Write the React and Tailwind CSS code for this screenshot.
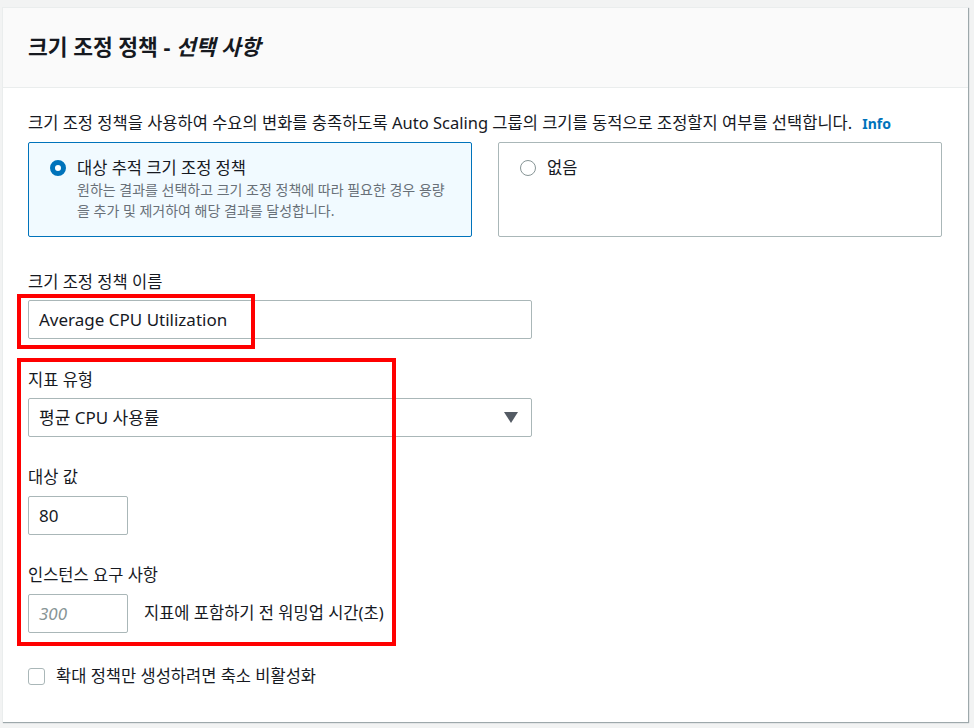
import React from "react";

const font = { fontFamily: '"Noto Sans", "Noto Sans CJK KR", sans-serif' };

function Label({ children }) {
  return <div className="text-[16.5px] leading-5 text-[#16191f]">{children}</div>;
}

function TextInput({ value, placeholder, className = "" }) {
  return (
    <div
      className={`h-[39px] flex items-center px-[10px] border border-[#aab7b8] rounded-[2px] bg-white text-[17px] ${className}`}
    >
      {value ? (
        <span className="text-[#16191f]">{value}</span>
      ) : (
        <span className="text-[#879596] italic">{placeholder}</span>
      )}
    </div>
  );
}

function RadioCard({ selected, title, desc }) {
  return (
    <div
      className={`flex-1 h-[95px] rounded-[2px] border px-[21px] pt-[15px] ${
        selected ? "border-[#0073bb] bg-[#f1faff]" : "border-[#aab7b8] bg-white"
      }`}
    >
      <div className="flex items-start gap-[11px]">
        {selected ? (
          <span className="mt-[2px] w-4 h-4 rounded-full border-[5px] border-[#0073bb] bg-white shrink-0" />
        ) : (
          <span className="mt-[2px] w-4 h-4 rounded-full border-[1.5px] border-[#879596] bg-white shrink-0" />
        )}
        <div>
          <div className="text-[16.5px] leading-5 text-[#16191f]">{title}</div>
          {desc && (
            <div className="mt-[1px] text-[14px] leading-[21px] text-[#687078]">{desc}</div>
          )}
        </div>
      </div>
    </div>
  );
}

export default function App() {
  return (
    <div className="w-[974px] h-[728px] bg-[#f2f3f3] pt-[7px] pl-[2px] pr-[6px] overflow-hidden" style={font}>
      <div className="h-[715px] bg-white border-t border-l border-[#eaeded] shadow-[1px_1px_1px_0_rgba(0,28,36,0.35)]">
        <div className="h-[80px] bg-[#fafafa] border-b border-[#eaeded] flex items-center pl-[25px]">
          <h2 className="text-[21.5px] font-bold text-[#16191f]">
            크기 조정 정책 - <span className="italic">선택 사항</span>
          </h2>
        </div>

        <div className="relative pl-[25px] pr-[26px] pt-[25px]">
          <div className="flex items-baseline text-[16.5px] leading-5 text-[#16191f]">
            <span>
              크기 조정 정책을 사용하여 수요의 변화를 충족하도록 Auto Scaling 그룹의 크기를 동적으로 조정할지 여부를 선택합니다.
            </span>
            <span className="ml-[10px] text-[14px] font-bold text-[#0073bb]">Info</span>
          </div>

          <div className="mt-[8px] flex gap-[26px]">
            <RadioCard
              selected
              title="대상 추적 크기 조정 정책"
              desc={
                <>
                  원하는 결과를 선택하고 크기 조정 정책에 따라 필요한 경우 용량
                  <br />을 추가 및 제거하여 해당 결과를 달성합니다.
                </>
              }
            />
            <RadioCard title="없음" />
          </div>

          <div className="mt-[35px]">
            <Label>크기 조정 정책 이름</Label>
            <TextInput className="mt-[8px] w-[504px]" value="Average CPU Utilization" />
          </div>

          <div className="mt-[31px]">
            <Label>지표 유형</Label>
            <div className="mt-[8px] w-[504px] h-[39px] flex items-center justify-between pl-[10px] pr-[13px] border border-[#aab7b8] rounded-[2px] text-[17px] text-[#16191f]">
              <span>평균 CPU 사용률</span>
              <svg width="14" height="11" viewBox="0 0 14 11">
                <path d="M0 0 H14 L7 11 Z" fill="#545b64" />
              </svg>
            </div>
          </div>

          <div className="mt-[30px]">
            <Label>대상 값</Label>
            <TextInput className="mt-[9px] w-[100px]" value="80" />
          </div>

          <div className="mt-[30px]">
            <Label>인스턴스 요구 사항</Label>
            <div className="mt-[9px] flex items-center gap-[16px]">
              <TextInput className="w-[100px]" placeholder="300" />
              <span className="text-[16.5px] text-[#16191f]">지표에 포함하기 전 워밍업 시간(초)</span>
            </div>
          </div>

          <div className="mt-[31px] flex items-center gap-[11px]">
            <span className="w-[17px] h-[17px] rounded-[3px] border border-[#aab7b8] bg-white" />
            <span className="text-[16.5px] text-[#16191f]">확대 정책만 생성하려면 축소 비활성화</span>
          </div>

          {/* annotation boxes */}
          <div className="absolute left-[14px] top-[206px] w-[238px] h-[55px] border-4 border-[#ff0000] pointer-events-none" />
          <div className="absolute left-[14px] top-[270px] w-[379px] h-[288px] border-4 border-[#ff0000] pointer-events-none" />
        </div>
      </div>
    </div>
  );
}
